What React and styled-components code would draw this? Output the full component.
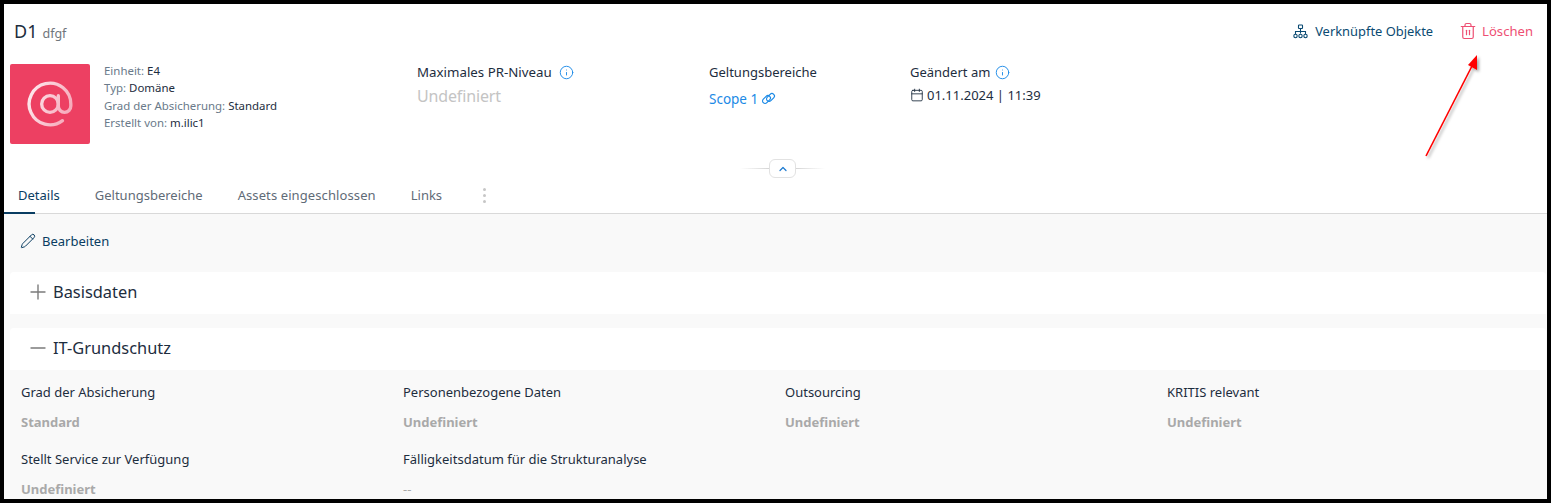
import React from "react";
import styled, { createGlobalStyle } from "styled-components";
import { Trash2, Info, Calendar, Pencil, ChevronUp, Plus, Minus } from "lucide-react";

const Global = createGlobalStyle`
  html, body { margin: 0; padding: 0; background: #000; }
  body { font-family: "Noto Sans", "Open Sans", sans-serif; color: #1d2d3e; }
`;
const Frame = styled.div`
  position: relative; box-sizing: border-box; width: 1551px; height: 503px;
  border: 4px solid #000; background: #fff; overflow: hidden;
`;
const TitleRow = styled.header`
  display: flex; align-items: center; justify-content: space-between; box-sizing: border-box;
  height: 60px; padding: 0 14px 6px 10px;
`;
const TitleGroup = styled.div`display: flex; align-items: baseline; gap: 5px;`;
const Title = styled.h1`margin: 0; font-size: 18px; font-weight: 400; color: #1d2d3e;`;
const Subtitle = styled.span`font-size: 12.5px; color: #70767c;`;
const Actions = styled.div`display: flex; align-items: center; gap: 26px;`;
const Action = styled.button`
  display: flex; align-items: center; gap: ${p => p.$danger ? 5 : 7}px; border: 0; padding: 0; background: none;
  font: inherit; font-size: ${p => p.$danger ? 13.1 : 12.9}px; color: ${p => p.$danger ? "#ee4f73" : "#0a4a72"};
`;
const Summary = styled.section`display: flex; height: 80px; padding-left: 6px;`;
const Tile = styled.div`
  display: flex; align-items: center; justify-content: center; flex: none;
  width: 80px; height: 80px; border-radius: 2px; background: #ed4062; margin-right: 14px;
`;
const Meta = styled.div`width: 313px; flex: none; margin-top: -2px;`;
const MetaLine = styled.div`font-size: 11.45px; line-height: 17.4px; color: #6a7a8a; white-space: nowrap; b { font-weight: 400; color: #1d2d3e; }`;
const KpiCol = styled.div`width: ${p => p.$w}px; flex: none;`;
const KpiLabel = styled.div`display: flex; align-items: center; gap: ${p => p.$gap || 6}px; height: 16px; font-size: ${p => p.$size || 13}px; color: #1d2d3e; svg { color: #1c8ae6; }`;
const Undefined = styled.div`margin-top: 6px; font-size: 16px; letter-spacing: -0.15px; line-height: 20px; color: #c4c4c4;`;
const ScopeLink = styled.a`display: flex; align-items: center; gap: 3px; margin-top: 10px; font-size: 13.5px; line-height: 18px; color: #1c8ae6;`;
const DateLine = styled.div`display: flex; align-items: center; gap: 3px; margin-top: 6px; font-size: 13px; line-height: 18px; color: #1d2d3e;`;
const CollapseBar = styled.div`display: flex; align-items: center; justify-content: center; height: 19px; margin: 15px 0 1px 14px;`;
const Rule = styled.span`width: 29px; height: 1px; background: ${p => p.$dir === "l" ? "linear-gradient(90deg,#fff,#d5d5d5)" : "linear-gradient(90deg,#d5d5d5,#fff)"};`;
const CollapseButton = styled.button`
  display: flex; align-items: center; justify-content: center; box-sizing: border-box;
  width: 27px; height: 19px; padding: 0; border: 1px solid #e2e2e2; border-radius: 6px; background: #fff; color: #1c7ad0;
`;
const Tabs = styled.nav`
  display: flex; align-items: center; height: 35px; box-sizing: border-box; padding-bottom: 2px; border-bottom: 1px solid #d9d9d9; position: relative;
`;
const Tab = styled.div`
  font-size: 13px; margin-left: ${p => p.$ml}px; letter-spacing: ${p => p.$ls || 0}px; color: ${p => p.$active ? "#0a3d62" : "#5f6b77"};
  white-space: nowrap;
`;
const ActiveBar = styled.span`position: absolute; left: 0; bottom: -1px; width: 31px; height: 2px; background: #0a3d62;`;
const Dots = styled.span`display: flex; flex-direction: column; gap: 3px; margin-left: 41px; i { width: 3px; height: 3px; border-radius: 50%; background: #c6c6c6; }`;
const Body = styled.main`background: #f9f9f9; padding: 0 1px 0 6px; height: 290px;`;
const EditRow = styled.div`display: flex; align-items: center; gap: 6px; box-sizing: border-box; height: 58px; padding: 0 0 4px 10px; font-size: 13px; color: #0a3d62;`;
const Panel = styled.div`
  display: flex; align-items: center; gap: 3px; box-sizing: border-box; height: 42px; margin-bottom: 14px; padding: 0 0 3px 16px;
  background: #fff; border-radius: 4px 4px 0 0; font-size: 16.4px; color: #1d2d3e; svg { color: #7b7b7b; }
`;
const Grid = styled.div`
  display: grid; grid-template-columns: repeat(4, 382px); row-gap: 19px; margin-top: -1px; padding-left: 11px;
`;
const Field = styled.div``;
const FieldLabel = styled.div`font-size: 13px; line-height: 18px; color: #1d2d3e;`;
const FieldValue = styled.div`margin-top: 12px; font-size: 13px; line-height: 18px; font-weight: ${p => p.$plain ? 400 : 700}; color: #a9a9a9;`;
const Annotation = styled.svg`position: absolute; left: 1410px; top: 40px; pointer-events: none;`;

const HierarchyIcon = () => (
  <svg width="15" height="15" viewBox="0 0 15 15" fill="none" stroke="currentColor" strokeWidth="1.1">
    <rect x="5.5" y="1" width="4" height="3.5" rx=".6" />
    <path d="M7.5 4.5v5M2.5 10V7.5h10V10" />
    <circle cx="2.5" cy="12" r="1.7" />
    <circle cx="7.5" cy="12" r="1.7" />
    <circle cx="12.5" cy="12" r="1.7" />
  </svg>
);
const AtMark = () => (
  <svg width="50" height="50" viewBox="0 0 24 24" fill="none" stroke="url(#atFade)" strokeWidth="1.6" strokeLinecap="round" strokeLinejoin="round">
    <defs>
      <linearGradient id="atFade" gradientUnits="userSpaceOnUse" x1="2" y1="8" x2="22" y2="16">
        <stop offset="0" stopColor="#fde6eb" />
        <stop offset="1" stopColor="#f6a8b9" />
      </linearGradient>
    </defs>
    <circle cx="12" cy="12" r="4" />
    <path d="M16 8v5a3 3 0 0 0 6 0v-1a10 10 0 1 0-4 8" />
  </svg>
);
const ChainIcon = () => (
  <svg width="15" height="14" viewBox="0 0 15 14" fill="none" stroke="currentColor" strokeWidth="1.2">
    <rect x="1" y="5" width="9" height="5" rx="2.5" transform="rotate(-45 5.5 7.5)" />
    <rect x="5" y="3" width="9" height="5" rx="2.5" transform="rotate(-45 9.5 5.5)" />
  </svg>
);

const fields = [
  ["Grad der Absicherung", "Standard"],
  ["Personenbezogene Daten", "Undefiniert"],
  ["Outsourcing", "Undefiniert"],
  ["KRITIS relevant", "Undefiniert"],
  ["Stellt Service zur Verfügung", "Undefiniert"],
  ["Fälligkeitsdatum für die Strukturanalyse", "--", true],
];

export default function App() {
  return (
    <>
      <Global />
      <Frame>
        <TitleRow>
          <TitleGroup><Title>D1</Title><Subtitle>dfgf</Subtitle></TitleGroup>
          <Actions>
            <Action><HierarchyIcon />Verknüpfte Objekte</Action>
            <Action $danger><Trash2 size={18} strokeWidth={1.6} />Löschen</Action>
          </Actions>
        </TitleRow>
        <Summary>
          <Tile><AtMark /></Tile>
          <Meta>
            <MetaLine>Einheit: <b>E4</b></MetaLine>
            <MetaLine>Typ: <b>Domäne</b></MetaLine>
            <MetaLine>Grad der Absicherung: <b>Standard</b></MetaLine>
            <MetaLine>Erstellt von: <b>m.ilic1</b></MetaLine>
          </Meta>
          <KpiCol $w={292}>
            <KpiLabel $size={13.3} $gap={7}>Maximales PR-Niveau <Info size={15} strokeWidth={1.5} /></KpiLabel>
            <Undefined>Undefiniert</Undefined>
          </KpiCol>
          <KpiCol $w={201}>
            <KpiLabel>Geltungsbereiche</KpiLabel>
            <ScopeLink>Scope 1 <ChainIcon /></ScopeLink>
          </KpiCol>
          <KpiCol $w={200}>
            <KpiLabel $gap={5}>Geändert am <Info size={15} strokeWidth={1.5} /></KpiLabel>
            <DateLine><Calendar size={14} strokeWidth={1.5} />01.11.2024 | 11:39</DateLine>
          </KpiCol>
        </Summary>
        <CollapseBar>
          <Rule $dir="l" />
          <CollapseButton><ChevronUp size={12} strokeWidth={2.4} /></CollapseButton>
          <Rule $dir="r" />
        </CollapseBar>
        <Tabs>
          <ActiveBar />
          <Tab $active $ml={14}>Details</Tab>
          <Tab $ml={35}>Geltungsbereiche</Tab>
          <Tab $ml={35} $ls={0.1}>Assets eingeschlossen</Tab>
          <Tab $ml={35}>Links</Tab>
          <Dots><i /><i /><i /></Dots>
        </Tabs>
        <Body>
          <EditRow><Pencil size={16} strokeWidth={1.5} />Bearbeiten</EditRow>
          <Panel><Plus size={24} strokeWidth={1.4} />Basisdaten</Panel>
          <Panel><Minus size={24} strokeWidth={1.4} />IT-Grundschutz</Panel>
          <Grid>
            {fields.map(([l, v, plain]) => (
              <Field key={l}><FieldLabel>{l}</FieldLabel><FieldValue $plain={plain}>{v}</FieldValue></Field>
            ))}
          </Grid>
        </Body>
        <Annotation width="80" height="120" viewBox="0 0 80 120">
          <defs>
            <filter id="sh"><feDropShadow dx="2" dy="2" stdDeviation="1.5" floodColor="#000" floodOpacity=".35" /></filter>
          </defs>
          <g filter="url(#sh)">
            <line x1="12" y1="112" x2="58" y2="22" stroke="#f00" strokeWidth="1.6" />
            <polygon points="63,11 63,26 54,21" fill="#f00" />
          </g>
        </Annotation>
      </Frame>
    </>
  );
}
